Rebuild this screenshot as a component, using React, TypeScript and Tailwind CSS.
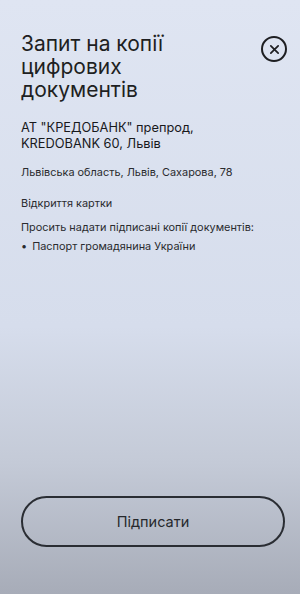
import React from "react";

export default function App() {
  return (
    <div
      className="flex min-h-[594px] w-[300px] flex-col bg-[linear-gradient(180deg,#dfe5f2_0%,#d6ddec_55%,#c4cad7_78%,#a7acb8_100%)] pl-[21px] pr-[15px] text-[#1e1f22]"
      style={{ fontFamily: "Inter, 'Noto Sans', sans-serif" }}
    >
      <div className="flex items-start justify-between pt-[32px]">
        <h1 className="text-[21px] font-normal leading-[23px]">
          <span className="block">Запит на копії</span>
          <span className="block">цифрових</span>
          <span className="block">документів</span>
        </h1>
        <button className="mr-[-2px] mt-[4px] flex h-[26px] w-[26px] items-center justify-center rounded-full border-[2px] border-[#1e1f22]">
          <svg width="11" height="11" viewBox="0 0 12 12" fill="none">
            <path d="M2 2L10 10M10 2L2 10" stroke="#1e1f22" strokeWidth="1.9" strokeLinecap="round" />
          </svg>
        </button>
      </div>

      <div className="mt-[19px] text-[12.8px] font-normal leading-[15.5px] text-[#18191c]">
        <span className="block">АТ "КРЕДОБАНК" препрод,</span>
        <span className="block">KREDOBANK 60, Львів</span>
      </div>

      <div className="mt-[14px] text-[10.9px] leading-[14px] text-[#2a2b2e]">
        Львівська область, Львів, Сахарова, 78
      </div>

      <div className="mt-[17px] text-[10.9px] leading-[14px] text-[#2a2b2e]">Відкриття картки</div>

      <div className="mt-[10px] text-[10.9px] leading-[14px] text-[#2a2b2e]">
        Просить надати підписані копії документів:
      </div>

      <ul className="mt-[5px] text-[10.9px] leading-[14px] text-[#2a2b2e]">
        <li className="flex items-start gap-[5px]">
          <span>•</span>
          <span>Паспорт громадянина України</span>
        </li>
      </ul>

      <div className="mt-auto pb-[47px]">
        <button className="flex h-[51px] w-[264px] items-center justify-center rounded-full border-[2px] border-[#2a2d33] text-[14.5px] text-[#26282c]">
          Підписати
        </button>
      </div>
    </div>
  );
}
